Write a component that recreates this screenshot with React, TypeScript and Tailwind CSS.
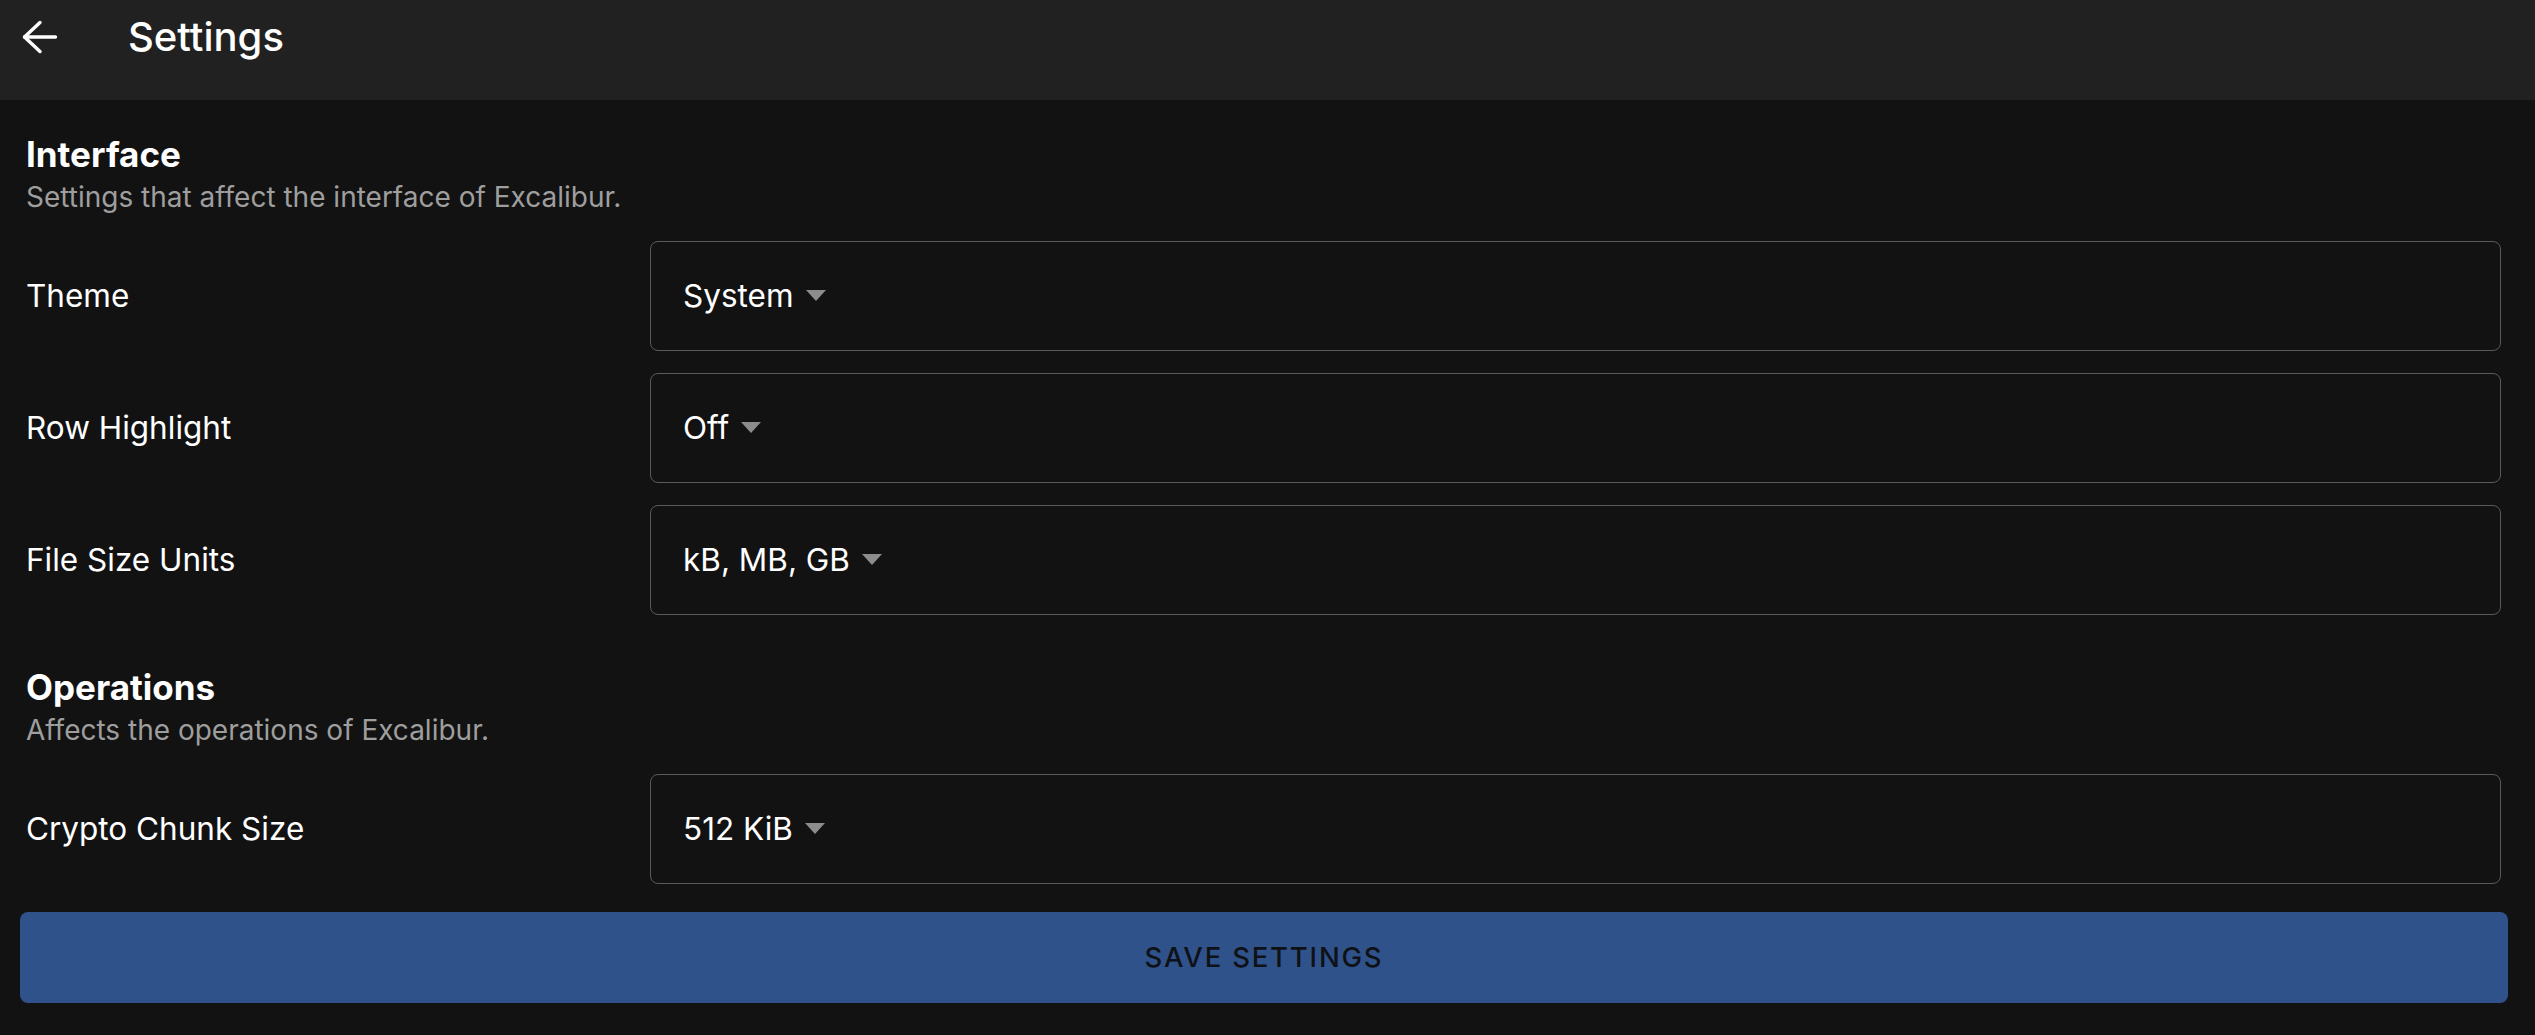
import React from "react";

const font = { fontFamily: "Inter, 'Noto Sans', sans-serif" };

function SelectRow({ label, value }: { label: string; value: string }) {
  return (
    <div className="flex items-center">
      <div className="w-[624px] shrink-0 text-[31.5px] leading-[40px] text-white">{label}</div>
      <div className="flex h-[110px] flex-1 items-center rounded-[8px] border border-[#5a5a5a] pl-[32px]">
        <span className="text-[31.5px] leading-[40px] text-white">{value}</span>
        <svg width="20" height="12" viewBox="0 0 20 12" className="ml-[12px]">
          <polygon points="0,0 20,0 10,11" fill="#8c8c8c" />
        </svg>
      </div>
    </div>
  );
}

function Section({ title, desc }: { title: string; desc: string }) {
  return (
    <div>
      <h2 className="text-[35px] font-bold leading-[44px] text-white">{title}</h2>
      <p className="mt-[3px] text-[28px] leading-[36px] text-[#9e9e9e]">{desc}</p>
    </div>
  );
}

export default function App() {
  return (
    <div style={font} className="min-h-[1035px] w-full bg-[#121212]">
      {/* header */}
      <header className="h-[100px] bg-[#212121]">
        <div className="flex h-[74px] items-center pl-[22px]">
          <svg width="36" height="34" viewBox="0 0 36 34" fill="none" stroke="white" strokeWidth="3.4" strokeLinecap="round" strokeLinejoin="round">
            <path d="M2.5 17H33.5" />
            <path d="M18 2.5L2.5 17L18 31.5" />
          </svg>
          <h1 className="ml-[70px] text-[40px] font-medium leading-[40px] text-white">Settings</h1>
        </div>
      </header>

      <main className="pl-[26px] pr-[34px] pt-[32px]">
        <Section title="Interface" desc="Settings that affect the interface of Excalibur." />
        <div className="mt-[26px] flex flex-col gap-[22px]">
          <SelectRow label="Theme" value="System" />
          <SelectRow label="Row Highlight" value="Off" />
          <SelectRow label="File Size Units" value="kB, MB, GB" />
        </div>

        <div className="mt-[50px]">
          <Section title="Operations" desc="Affects the operations of Excalibur." />
        </div>
        <div className="mt-[26px]">
          <SelectRow label="Crypto Chunk Size" value="512 KiB" />
        </div>
      </main>

      <div className="pl-[20px] pr-[27px] pt-[28px]">
        <button className="flex h-[91px] w-full items-center justify-center rounded-[8px] bg-[#30528a] text-[27.5px] font-medium tracking-[1.8px] text-[#0e1116]">
          SAVE SETTINGS
        </button>
      </div>
    </div>
  );
}
